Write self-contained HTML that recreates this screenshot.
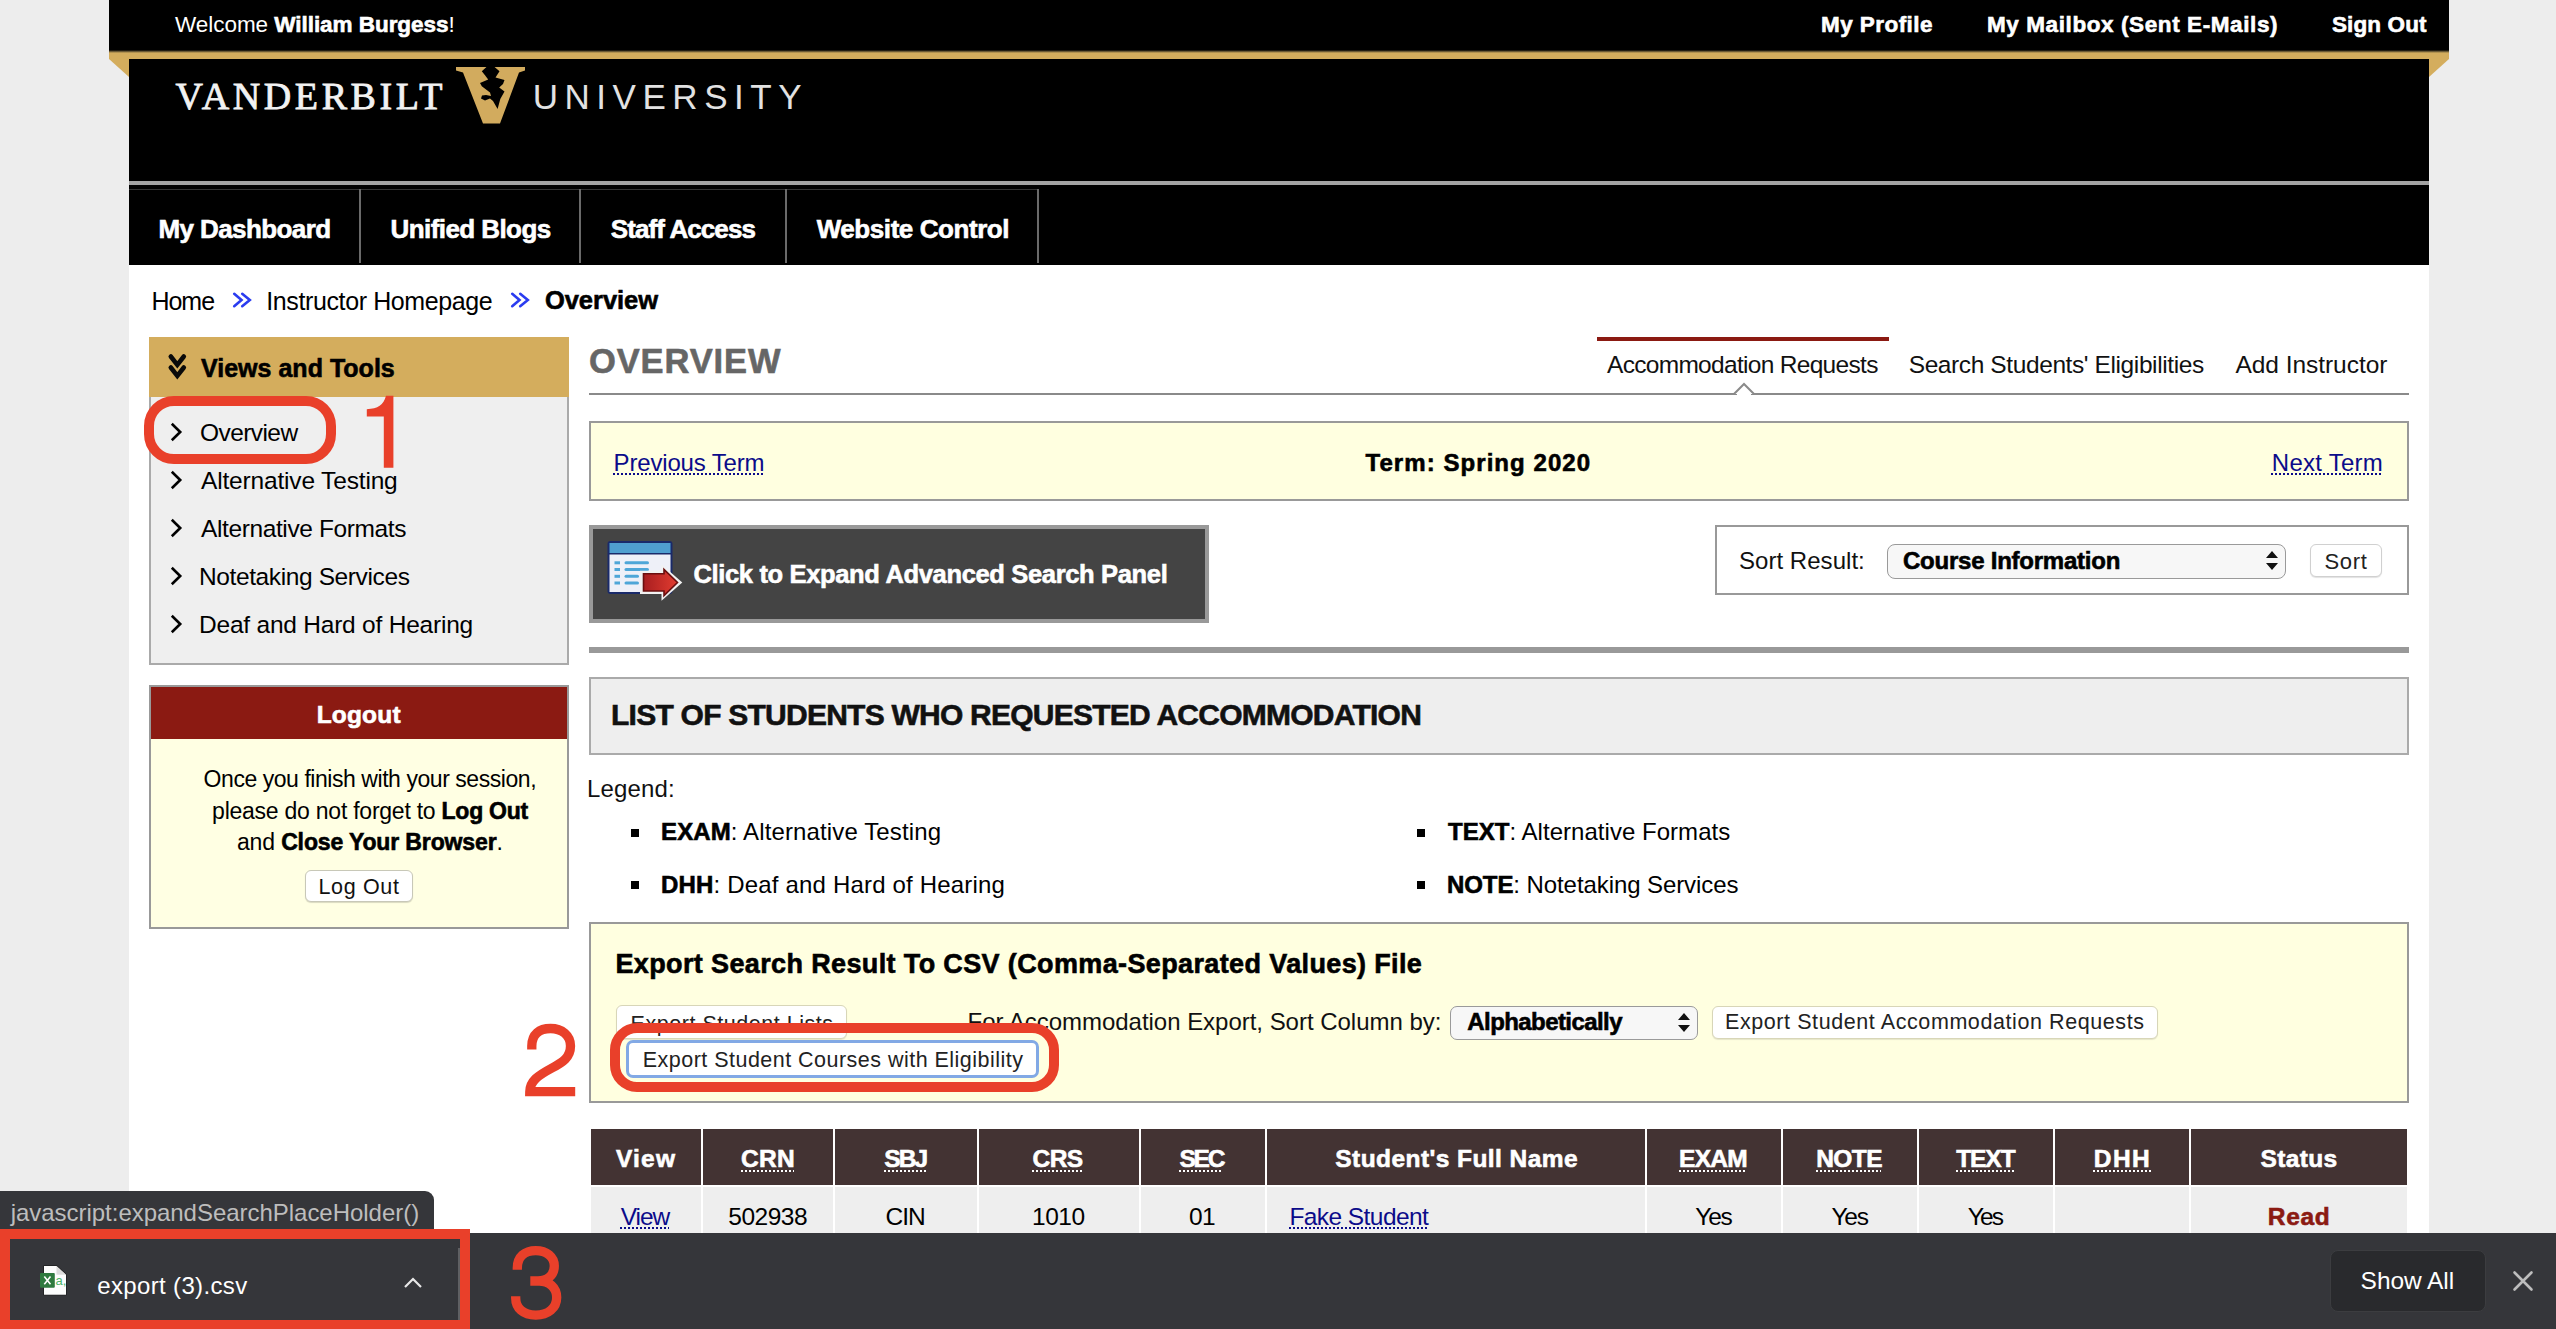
<!DOCTYPE html>
<html><head><meta charset="utf-8"><title>Overview</title>
<style>html,body{margin:0;padding:0;width:2556px;height:1329px;overflow:hidden;position:relative;font-family:"Liberation Sans",sans-serif;} b{font-weight:700;-webkit-text-stroke:0.6px}</style>
</head><body>
<div style="position:absolute;left:0px;top:0px;width:2556px;height:1329px;background:#ededed;"></div>
<div style="position:absolute;left:129px;top:59px;width:2300px;height:1270px;background:#ffffff;"></div>
<div style="position:absolute;left:109px;top:0px;width:2340px;height:50px;background:#000;"></div>
<div style="position:absolute;left:109px;top:50px;width:2340px;height:9px;background:linear-gradient(#000 0,#6b5a35 1.5px,#d4ad5d 3px,#d4ad5d 100%);"></div>
<svg style="position:absolute;left:109px;top:59px" width="20" height="18"><polygon points="0,0 20,0 20,18" fill="#d4ad5d"/></svg>
<svg style="position:absolute;left:2429px;top:59px" width="20" height="18"><polygon points="0,0 20,0 0,18" fill="#d4ad5d"/></svg>
<div style="position:absolute;left:129px;top:59px;width:2300px;height:122px;background:#000;"></div>
<div style="position:absolute;left:129px;top:181px;width:2300px;height:4px;background:#a3a3a3;"></div>
<div style="position:absolute;left:129px;top:185px;width:2300px;height:80px;background:#000;"></div>
<div style="position:absolute;left:129px;top:189px;width:909px;height:1px;background:#333;"></div>
<div style="position:absolute;left:359px;top:189px;width:2px;height:74px;background:#6a6a6a;"></div>
<div style="position:absolute;left:579px;top:189px;width:2px;height:74px;background:#6a6a6a;"></div>
<div style="position:absolute;left:785px;top:189px;width:2px;height:74px;background:#6a6a6a;"></div>
<div style="position:absolute;left:1037px;top:189px;width:2px;height:74px;background:#6a6a6a;"></div>
<svg style="position:absolute;left:445px;top:60px" width="90" height="70" viewBox="0 0 90 70">
<path d="M11,7 L42.5,7 L46,12 L49,7 L80,7 L80,10.5 L74,12.5 L55,63.5 L38,63.5 L18,12.5 L11,10.5 Z" fill="#d2ab5e"/>
<path d="M42,6.5 L49,6.5 L54.5,11.3 L50.5,17.4 L59.5,20 L58,24 L54.2,27.4 L59.5,31.6 L55.3,39 L52.6,49 L48,41 L45,38.5 L40,40.5 L36,38.5 L37,35.5 L41,35 L46,36 L45,32.5 L36.8,26.3 L35,23 L43.2,19.5 L40,15.3 L36.8,11.3 Z" fill="#000"/>
</svg>
<svg style="position:absolute;left:225px;top:285px" width="30" height="30"><path d="M9.2,8.8 L16.5,15 L9.2,21.2 M17.2,8.8 L24.8,15 L17.2,21.2" stroke="#2a3cf0" stroke-width="2.6" fill="none" stroke-linecap="round" stroke-linejoin="miter"/></svg>
<svg style="position:absolute;left:502.5px;top:285px" width="30" height="30"><path d="M9.2,8.8 L16.5,15 L9.2,21.2 M17.2,8.8 L24.8,15 L17.2,21.2" stroke="#2a3cf0" stroke-width="2.6" fill="none" stroke-linecap="round" stroke-linejoin="miter"/></svg>
<div style="position:absolute;left:149px;top:337px;width:420px;height:60px;background:#d4ad5d;"></div>
<svg style="position:absolute;left:160px;top:345px" width="40" height="45"><path d="M10.8,11.5 L17.3,19.8 L23.8,11.5 M10.8,22.5 L17.3,30.8 L23.8,22.5" stroke="#0a0a0a" stroke-width="4.6" fill="none" stroke-linecap="round"/></svg>
<div style="position:absolute;left:149px;top:397px;width:420px;height:268px;box-sizing:border-box;border:2px solid #aaa;background:#efefef;border-top:none;"></div>
<svg style="position:absolute;left:165px;top:417px" width="25" height="30"><path d="M6.8,6.8 L15.2,15 L6.8,23.2" stroke="#000" stroke-width="2.6" fill="none"/></svg>
<svg style="position:absolute;left:165px;top:465px" width="25" height="30"><path d="M6.8,6.8 L15.2,15 L6.8,23.2" stroke="#000" stroke-width="2.6" fill="none"/></svg>
<svg style="position:absolute;left:165px;top:513px" width="25" height="30"><path d="M6.8,6.8 L15.2,15 L6.8,23.2" stroke="#000" stroke-width="2.6" fill="none"/></svg>
<svg style="position:absolute;left:165px;top:561px" width="25" height="30"><path d="M6.8,6.8 L15.2,15 L6.8,23.2" stroke="#000" stroke-width="2.6" fill="none"/></svg>
<svg style="position:absolute;left:165px;top:609px" width="25" height="30"><path d="M6.8,6.8 L15.2,15 L6.8,23.2" stroke="#000" stroke-width="2.6" fill="none"/></svg>
<div style="position:absolute;left:149px;top:685px;width:420px;height:244px;box-sizing:border-box;border:2px solid #999;background:#ffffe3;"></div>
<div style="position:absolute;left:151px;top:687px;width:416px;height:52px;background:#8b1a12;"></div>
<div style="position:absolute;left:305px;top:870px;width:108px;height:32px;box-sizing:border-box;border:1px solid #c8c8b8;background:#fff;border-radius:6px;box-shadow:0 1px 1px rgba(0,0,0,0.15);"></div>
<div style="position:absolute;left:1597px;top:337px;width:292px;height:4px;background:#8b1a12;"></div>
<div style="position:absolute;left:589px;top:393px;width:1820px;height:2px;background:#8a8a8a;"></div>
<svg style="position:absolute;left:1730px;top:380px" width="28" height="16"><path d="M4,14 L14,4 L24,14" stroke="#8a8a8a" stroke-width="2" fill="#fff"/><rect x="7" y="13" width="14" height="2" fill="#fff"/></svg>
<div style="position:absolute;left:589px;top:421px;width:1820px;height:80px;box-sizing:border-box;border:2px solid #999;background:#ffffe0;"></div>
<div style="position:absolute;left:589px;top:525px;width:620px;height:98px;box-sizing:border-box;border:4px solid #999;background:#444;"></div>
<svg style="position:absolute;left:600px;top:535px" width="90" height="75" viewBox="0 0 90 75">
<rect x="7.5" y="6" width="65" height="53" rx="3" fill="#1a2a6a"/>
<rect x="9.5" y="8" width="61" height="10" fill="#4f9fd0"/>
<rect x="9.5" y="19.5" width="61" height="37.5" fill="#eef0f8"/>
<g fill="#4ea6d8"><rect x="14.5" y="26.3" width="5.5" height="3"/><rect x="14.5" y="33" width="5.5" height="3"/><rect x="14.5" y="39.8" width="5.5" height="3"/><rect x="14.5" y="46.5" width="5.5" height="3"/>
<rect x="24.5" y="26.3" width="24.5" height="3" rx="1.5"/><rect x="24.5" y="33" width="24.5" height="3" rx="1.5"/><rect x="24.5" y="39.8" width="14.5" height="3" rx="1.5"/><rect x="24.5" y="46.5" width="14.5" height="3" rx="1.5"/></g>
<path d="M40,35.8 L61.5,35.8 L61.5,29.2 L82.3,47.5 L61.5,65.8 L61.5,59 L40,59 Z" fill="#f2f2f2"/>
<defs><linearGradient id="ag" x1="0" y1="0" x2="1" y2="0"><stop offset="0" stop-color="#a81e20"/><stop offset="1" stop-color="#e23c30"/></linearGradient></defs><path d="M43.5,38.8 L64,38.8 L64,34.5 L77.5,47.5 L64,60.5 L64,56 L43.5,56 Z" fill="url(#ag)" stroke="#6a0f0f" stroke-width="1.6"/>
</svg>
<div style="position:absolute;left:1715px;top:525px;width:694px;height:70px;box-sizing:border-box;border:2px solid #999;background:#fff;"></div>
<div style="position:absolute;left:1887px;top:543.5px;width:399px;height:35.0px;box-sizing:border-box;border:1.5px solid #9a9a9a;background:#f7f7f7;border-radius:8px;"></div>
<svg style="position:absolute;left:2262px;top:548px" width="20" height="26"><path d="M4,10 L10,3 L16,10 Z M4,15 L10,22 L16,15 Z" fill="#111"/></svg>
<div style="position:absolute;left:2310px;top:543.5px;width:72px;height:33.5px;box-sizing:border-box;border:1px solid #d0d0d0;background:#fff;border-radius:6px;box-shadow:0 1px 1px rgba(0,0,0,0.12);"></div>
<div style="position:absolute;left:589px;top:647px;width:1820px;height:6px;background:#999;"></div>
<div style="position:absolute;left:589px;top:677px;width:1820px;height:78px;box-sizing:border-box;border:2px solid #aaa;background:#eeeeee;"></div>
<div style="position:absolute;left:631px;top:829px;width:8px;height:8px;background:#000;"></div>
<div style="position:absolute;left:631px;top:881px;width:8px;height:8px;background:#000;"></div>
<div style="position:absolute;left:1417px;top:829px;width:8px;height:8px;background:#000;"></div>
<div style="position:absolute;left:1417px;top:881px;width:8px;height:8px;background:#000;"></div>
<div style="position:absolute;left:589px;top:921.5px;width:1820px;height:181.5px;box-sizing:border-box;border:2px solid #999;background:#ffffe0;"></div>
<div style="position:absolute;left:616px;top:1005px;width:231px;height:33.5px;box-sizing:border-box;border:1px solid #d8d6b8;background:#fff;border-radius:6px;box-shadow:0 1px 1px rgba(0,0,0,0.1);"></div>
<div style="position:absolute;left:1450px;top:1005.5px;width:248px;height:34.5px;box-sizing:border-box;border:1.5px solid #9a9a9a;background:#f7f7f7;border-radius:7px;"></div>
<svg style="position:absolute;left:1674px;top:1010px" width="20" height="26"><path d="M4,10 L10,3 L16,10 Z M4,15 L10,22 L16,15 Z" fill="#111"/></svg>
<div style="position:absolute;left:1712px;top:1005.5px;width:445.5px;height:33.0px;box-sizing:border-box;border:1px solid #d8d6b8;background:#fff;border-radius:6px;box-shadow:0 1px 1px rgba(0,0,0,0.1);"></div>
<div style="position:absolute;left:591px;top:1129px;width:110px;height:56px;background:#433333;"></div>
<div style="position:absolute;left:591px;top:1187px;width:110px;height:142px;background:#eeeeee;"></div>
<div style="position:absolute;left:703px;top:1129px;width:130px;height:56px;background:#433333;"></div>
<div style="position:absolute;left:703px;top:1187px;width:130px;height:142px;background:#eeeeee;"></div>
<div style="position:absolute;left:835px;top:1129px;width:142px;height:56px;background:#433333;"></div>
<div style="position:absolute;left:835px;top:1187px;width:142px;height:142px;background:#eeeeee;"></div>
<div style="position:absolute;left:979px;top:1129px;width:160px;height:56px;background:#433333;"></div>
<div style="position:absolute;left:979px;top:1187px;width:160px;height:142px;background:#eeeeee;"></div>
<div style="position:absolute;left:1141px;top:1129px;width:124px;height:56px;background:#433333;"></div>
<div style="position:absolute;left:1141px;top:1187px;width:124px;height:142px;background:#eeeeee;"></div>
<div style="position:absolute;left:1267px;top:1129px;width:378px;height:56px;background:#433333;"></div>
<div style="position:absolute;left:1267px;top:1187px;width:378px;height:142px;background:#eeeeee;"></div>
<div style="position:absolute;left:1647px;top:1129px;width:134px;height:56px;background:#433333;"></div>
<div style="position:absolute;left:1647px;top:1187px;width:134px;height:142px;background:#eeeeee;"></div>
<div style="position:absolute;left:1783px;top:1129px;width:134px;height:56px;background:#433333;"></div>
<div style="position:absolute;left:1783px;top:1187px;width:134px;height:142px;background:#eeeeee;"></div>
<div style="position:absolute;left:1919px;top:1129px;width:134px;height:56px;background:#433333;"></div>
<div style="position:absolute;left:1919px;top:1187px;width:134px;height:142px;background:#eeeeee;"></div>
<div style="position:absolute;left:2055px;top:1129px;width:134px;height:56px;background:#433333;"></div>
<div style="position:absolute;left:2055px;top:1187px;width:134px;height:142px;background:#eeeeee;"></div>
<div style="position:absolute;left:2191px;top:1129px;width:216px;height:56px;background:#433333;"></div>
<div style="position:absolute;left:2191px;top:1187px;width:216px;height:142px;background:#eeeeee;"></div>
<div style="position:absolute;left:589px;top:1127px;width:1820px;height:2px;background:#fff;"></div>
<div style="position:absolute;left:175.0px;top:14.4px;font-family:'Liberation Sans';font-weight:400;font-size:22.5px;line-height:22.5px;white-space:pre;letter-spacing:-0.043px;color:#fff;">Welcome <b>William Burgess</b>!</div>
<div style="position:absolute;left:1821.0px;top:13.7px;font-family:'Liberation Sans';font-weight:700;font-size:22.5px;line-height:22.5px;white-space:pre;letter-spacing:0.444px;color:#fff;-webkit-text-stroke:0.6px;">My Profile</div>
<div style="position:absolute;left:1987.0px;top:13.7px;font-family:'Liberation Sans';font-weight:700;font-size:22.5px;line-height:22.5px;white-space:pre;letter-spacing:0.592px;color:#fff;-webkit-text-stroke:0.6px;">My Mailbox (Sent E-Mails)</div>
<div style="position:absolute;left:2332.0px;top:13.7px;font-family:'Liberation Sans';font-weight:700;font-size:22.5px;line-height:22.5px;white-space:pre;letter-spacing:0.114px;color:#fff;-webkit-text-stroke:0.6px;">Sign Out</div>
<div style="position:absolute;left:175.5px;top:77.2px;font-family:'Liberation Serif';font-weight:400;font-size:38px;line-height:38px;white-space:pre;letter-spacing:3.611px;color:#f2f2f2;-webkit-text-stroke:0.8px #f2f2f2;">VANDERBILT</div>
<div style="position:absolute;left:532.7px;top:79.0px;font-family:'Liberation Sans';font-weight:400;font-size:35px;line-height:35px;white-space:pre;letter-spacing:6.533px;color:#e2e2e2;">UNIVERSITY</div>
<div style="position:absolute;left:158.5px;top:215.7px;font-family:'Liberation Sans';font-weight:700;font-size:26px;line-height:26px;white-space:pre;letter-spacing:-0.591px;color:#fff;-webkit-text-stroke:0.6px;">My Dashboard</div>
<div style="position:absolute;left:390.5px;top:215.7px;font-family:'Liberation Sans';font-weight:700;font-size:26px;line-height:26px;white-space:pre;letter-spacing:-0.575px;color:#fff;-webkit-text-stroke:0.6px;">Unified Blogs</div>
<div style="position:absolute;left:610.8px;top:215.7px;font-family:'Liberation Sans';font-weight:700;font-size:26px;line-height:26px;white-space:pre;letter-spacing:-0.909px;color:#fff;-webkit-text-stroke:0.6px;">Staff Access</div>
<div style="position:absolute;left:816.7px;top:215.7px;font-family:'Liberation Sans';font-weight:700;font-size:26px;line-height:26px;white-space:pre;letter-spacing:-0.429px;color:#fff;-webkit-text-stroke:0.6px;">Website Control</div>
<div style="position:absolute;left:151.4px;top:289.1px;font-family:'Liberation Sans';font-weight:400;font-size:25px;line-height:25px;white-space:pre;letter-spacing:-1.0px;color:#000;">Home</div>
<div style="position:absolute;left:266.3px;top:289.1px;font-family:'Liberation Sans';font-weight:400;font-size:25px;line-height:25px;white-space:pre;letter-spacing:-0.389px;color:#000;">Instructor Homepage</div>
<div style="position:absolute;left:544.9px;top:288.0px;font-family:'Liberation Sans';font-weight:700;font-size:25.5px;line-height:25.5px;white-space:pre;letter-spacing:-0.029px;color:#000;-webkit-text-stroke:0.6px;">Overview</div>
<div style="position:absolute;left:201.0px;top:356.2px;font-family:'Liberation Sans';font-weight:700;font-size:25px;line-height:25px;white-space:pre;letter-spacing:0.014px;color:#000;-webkit-text-stroke:0.6px;">Views and Tools</div>
<div style="position:absolute;left:200.0px;top:420.8px;font-family:'Liberation Sans';font-weight:400;font-size:24.5px;line-height:24.5px;white-space:pre;letter-spacing:-0.571px;color:#000;">Overview</div>
<div style="position:absolute;left:201.0px;top:468.8px;font-family:'Liberation Sans';font-weight:400;font-size:24.5px;line-height:24.5px;white-space:pre;letter-spacing:-0.167px;color:#000;">Alternative Testing</div>
<div style="position:absolute;left:201.0px;top:516.8px;font-family:'Liberation Sans';font-weight:400;font-size:24.5px;line-height:24.5px;white-space:pre;letter-spacing:-0.389px;color:#000;">Alternative Formats</div>
<div style="position:absolute;left:199.0px;top:564.8px;font-family:'Liberation Sans';font-weight:400;font-size:24.5px;line-height:24.5px;white-space:pre;letter-spacing:-0.389px;color:#000;">Notetaking Services</div>
<div style="position:absolute;left:199.0px;top:612.8px;font-family:'Liberation Sans';font-weight:400;font-size:24.5px;line-height:24.5px;white-space:pre;letter-spacing:-0.217px;color:#000;">Deaf and Hard of Hearing</div>
<div style="position:absolute;left:316.7px;top:703.2px;font-family:'Liberation Sans';font-weight:700;font-size:24.5px;line-height:24.5px;white-space:pre;letter-spacing:0.18px;color:#fff;-webkit-text-stroke:0.6px;">Logout</div>
<div style="position:absolute;left:203.6px;top:767.9px;font-family:'Liberation Sans';font-weight:400;font-size:23px;line-height:23px;white-space:pre;letter-spacing:-0.448px;color:#000;">Once you finish with your session,</div>
<div style="position:absolute;left:212.1px;top:799.8px;font-family:'Liberation Sans';font-weight:400;font-size:23px;line-height:23px;white-space:pre;letter-spacing:-0.243px;color:#000;">please do not forget to <b>Log Out</b></div>
<div style="position:absolute;left:236.9px;top:831.2px;font-family:'Liberation Sans';font-weight:400;font-size:23px;line-height:23px;white-space:pre;letter-spacing:-0.132px;color:#000;">and <b>Close Your Browser</b>.</div>
<div style="position:absolute;left:318.4px;top:877.2px;font-family:'Liberation Sans';font-weight:400;font-size:21.5px;line-height:21.5px;white-space:pre;letter-spacing:0.667px;color:#111;">Log Out</div>
<div style="position:absolute;left:589.0px;top:343.9px;font-family:'Liberation Sans';font-weight:700;font-size:34.5px;line-height:34.5px;white-space:pre;letter-spacing:0.886px;color:#666;-webkit-text-stroke:0.6px;">OVERVIEW</div>
<div style="position:absolute;left:1607.0px;top:353.2px;font-family:'Liberation Sans';font-weight:400;font-size:24.5px;line-height:24.5px;white-space:pre;letter-spacing:-0.695px;color:#111;">Accommodation Requests</div>
<div style="position:absolute;left:1908.7px;top:353.2px;font-family:'Liberation Sans';font-weight:400;font-size:24.5px;line-height:24.5px;white-space:pre;letter-spacing:-0.397px;color:#111;">Search Students' Eligibilities</div>
<div style="position:absolute;left:2235.4px;top:353.2px;font-family:'Liberation Sans';font-weight:400;font-size:24.5px;line-height:24.5px;white-space:pre;letter-spacing:-0.038px;color:#111;">Add Instructor</div>
<div style="position:absolute;left:613.6px;top:450.6px;font-family:'Liberation Sans';font-weight:400;font-size:24px;line-height:24px;white-space:pre;letter-spacing:-0.167px;color:#0b0b8a;"><span style="text-decoration:underline dotted;text-decoration-thickness:2px;text-underline-offset:3px">Previous Term</span></div>
<div style="position:absolute;left:1365.5px;top:451.1px;font-family:'Liberation Sans';font-weight:700;font-size:24px;line-height:24px;white-space:pre;letter-spacing:1.062px;color:#000;-webkit-text-stroke:0.6px;">Term: Spring 2020</div>
<div style="position:absolute;left:2271.8px;top:450.6px;font-family:'Liberation Sans';font-weight:400;font-size:24px;line-height:24px;white-space:pre;letter-spacing:0.25px;color:#0b0b8a;"><span style="text-decoration:underline dotted;text-decoration-thickness:2px;text-underline-offset:3px">Next Term</span></div>
<div style="position:absolute;left:693.4px;top:562.0px;font-family:'Liberation Sans';font-weight:700;font-size:25.5px;line-height:25.5px;white-space:pre;letter-spacing:-0.339px;color:#fff;-webkit-text-stroke:0.6px;">Click to Expand Advanced Search Panel</div>
<div style="position:absolute;left:1739.0px;top:548.9px;font-family:'Liberation Sans';font-weight:400;font-size:24px;line-height:24px;white-space:pre;letter-spacing:0.036px;color:#111;">Sort Result:</div>
<div style="position:absolute;left:1903.0px;top:548.9px;font-family:'Liberation Sans';font-weight:700;font-size:24px;line-height:24px;white-space:pre;letter-spacing:-0.235px;color:#000;-webkit-text-stroke:0.6px;">Course Information</div>
<div style="position:absolute;left:2324.5px;top:550.6px;font-family:'Liberation Sans';font-weight:400;font-size:22px;line-height:22px;white-space:pre;letter-spacing:0.667px;color:#222;">Sort</div>
<div style="position:absolute;left:611.0px;top:700.0px;font-family:'Liberation Sans';font-weight:700;font-size:30px;line-height:30px;white-space:pre;letter-spacing:-0.756px;color:#111;-webkit-text-stroke:0.6px;">LIST OF STUDENTS WHO REQUESTED ACCOMMODATION</div>
<div style="position:absolute;left:587.0px;top:777.0px;font-family:'Liberation Sans';font-weight:400;font-size:24px;line-height:24px;white-space:pre;letter-spacing:0.167px;color:#111;">Legend:</div>
<div style="position:absolute;left:661.0px;top:820.3px;font-family:'Liberation Sans';font-weight:400;font-size:24px;line-height:24px;white-space:pre;letter-spacing:0.125px;color:#000;"><b>EXAM</b>: Alternative Testing</div>
<div style="position:absolute;left:661.0px;top:872.6px;font-family:'Liberation Sans';font-weight:400;font-size:24px;line-height:24px;white-space:pre;letter-spacing:0.179px;color:#000;"><b>DHH</b>: Deaf and Hard of Hearing</div>
<div style="position:absolute;left:1448.0px;top:820.3px;font-family:'Liberation Sans';font-weight:400;font-size:24px;line-height:24px;white-space:pre;letter-spacing:0.033px;color:#000;"><b>TEXT</b>: Alternative Formats</div>
<div style="position:absolute;left:1447.0px;top:872.6px;font-family:'Liberation Sans';font-weight:400;font-size:24px;line-height:24px;white-space:pre;letter-spacing:-0.083px;color:#000;"><b>NOTE</b>: Notetaking Services</div>
<div style="position:absolute;left:615.4px;top:950.5px;font-family:'Liberation Sans';font-weight:700;font-size:27px;line-height:27px;white-space:pre;letter-spacing:0.371px;color:#000;-webkit-text-stroke:0.6px;">Export Search Result To CSV (Comma-Separated Values) File</div>
<div style="position:absolute;left:630.6px;top:1013.7px;font-family:'Liberation Sans';font-weight:400;font-size:21.5px;line-height:21.5px;white-space:pre;letter-spacing:0.526px;color:#222;">Export Student Lists</div>
<div style="position:absolute;left:967.5px;top:1010.1px;font-family:'Liberation Sans';font-weight:400;font-size:24px;line-height:24px;white-space:pre;letter-spacing:-0.025px;color:#111;">For Accommodation Export, Sort Column by:</div>
<div style="position:absolute;left:1467.3px;top:1010.1px;font-family:'Liberation Sans';font-weight:700;font-size:24px;line-height:24px;white-space:pre;letter-spacing:-0.577px;color:#000;-webkit-text-stroke:0.6px;">Alphabetically</div>
<div style="position:absolute;left:1725.0px;top:1012.2px;font-family:'Liberation Sans';font-weight:400;font-size:21.5px;line-height:21.5px;white-space:pre;letter-spacing:0.583px;color:#222;">Export Student Accommodation Requests</div>
<div style="position:absolute;left:626px;top:1040px;width:413px;height:38px;box-sizing:border-box;border:3.5px solid #82a9e5;background:#fff;border-radius:7px;"></div>
<div style="position:absolute;left:642.8px;top:1049.9px;font-family:'Liberation Sans';font-weight:400;font-size:21.5px;line-height:21.5px;white-space:pre;letter-spacing:0.474px;color:#222;">Export Student Courses with Eligibility</div>
<div style="position:absolute;left:616.0px;top:1147.2px;font-family:'Liberation Sans';font-weight:700;font-size:24.5px;line-height:24.5px;white-space:pre;letter-spacing:1.2px;color:#fff;-webkit-text-stroke:0.6px;">View</div>
<div style="position:absolute;left:741.0px;top:1147.2px;font-family:'Liberation Sans';font-weight:700;font-size:24.5px;line-height:24.5px;white-space:pre;letter-spacing:0.3px;color:#fff;-webkit-text-stroke:0.6px;"><span style="text-decoration:underline dotted;text-decoration-thickness:2px;text-underline-offset:3px">CRN</span></div>
<div style="position:absolute;left:884.2px;top:1147.2px;font-family:'Liberation Sans';font-weight:700;font-size:24.5px;line-height:24.5px;white-space:pre;letter-spacing:-1.8px;color:#fff;-webkit-text-stroke:0.6px;"><span style="text-decoration:underline dotted;text-decoration-thickness:2px;text-underline-offset:3px">SBJ</span></div>
<div style="position:absolute;left:1032.5px;top:1147.2px;font-family:'Liberation Sans';font-weight:700;font-size:24.5px;line-height:24.5px;white-space:pre;letter-spacing:-0.55px;color:#fff;-webkit-text-stroke:0.6px;"><span style="text-decoration:underline dotted;text-decoration-thickness:2px;text-underline-offset:3px">CRS</span></div>
<div style="position:absolute;left:1179.4px;top:1147.2px;font-family:'Liberation Sans';font-weight:700;font-size:24.5px;line-height:24.5px;white-space:pre;letter-spacing:-2.2px;color:#fff;-webkit-text-stroke:0.6px;"><span style="text-decoration:underline dotted;text-decoration-thickness:2px;text-underline-offset:3px">SEC</span></div>
<div style="position:absolute;left:1335.3px;top:1147.2px;font-family:'Liberation Sans';font-weight:700;font-size:24.5px;line-height:24.5px;white-space:pre;letter-spacing:0.428px;color:#fff;-webkit-text-stroke:0.6px;">Student's Full Name</div>
<div style="position:absolute;left:1679.0px;top:1147.2px;font-family:'Liberation Sans';font-weight:700;font-size:24.5px;line-height:24.5px;white-space:pre;letter-spacing:-0.667px;color:#fff;-webkit-text-stroke:0.6px;"><span style="text-decoration:underline dotted;text-decoration-thickness:2px;text-underline-offset:3px">EXAM</span></div>
<div style="position:absolute;left:1816.2px;top:1147.2px;font-family:'Liberation Sans';font-weight:700;font-size:24.5px;line-height:24.5px;white-space:pre;letter-spacing:-0.567px;color:#fff;-webkit-text-stroke:0.6px;"><span style="text-decoration:underline dotted;text-decoration-thickness:2px;text-underline-offset:3px">NOTE</span></div>
<div style="position:absolute;left:1956.2px;top:1147.2px;font-family:'Liberation Sans';font-weight:700;font-size:24.5px;line-height:24.5px;white-space:pre;letter-spacing:-1.067px;color:#fff;-webkit-text-stroke:0.6px;"><span style="text-decoration:underline dotted;text-decoration-thickness:2px;text-underline-offset:3px">TEXT</span></div>
<div style="position:absolute;left:2093.7px;top:1147.2px;font-family:'Liberation Sans';font-weight:700;font-size:24.5px;line-height:24.5px;white-space:pre;letter-spacing:1.5px;color:#fff;-webkit-text-stroke:0.6px;"><span style="text-decoration:underline dotted;text-decoration-thickness:2px;text-underline-offset:3px">DHH</span></div>
<div style="position:absolute;left:2260.5px;top:1147.2px;font-family:'Liberation Sans';font-weight:700;font-size:24.5px;line-height:24.5px;white-space:pre;letter-spacing:0.36px;color:#fff;-webkit-text-stroke:0.6px;">Status</div>
<div style="position:absolute;left:620.8px;top:1204.8px;font-family:'Liberation Sans';font-weight:400;font-size:24.5px;line-height:24.5px;white-space:pre;letter-spacing:-1.1px;color:#0b0b8a;"><span style="text-decoration:underline dotted;text-decoration-thickness:2px;text-underline-offset:3px">View</span></div>
<div style="position:absolute;left:728.3px;top:1204.8px;font-family:'Liberation Sans';font-weight:400;font-size:24.5px;line-height:24.5px;white-space:pre;letter-spacing:-0.5px;color:#000;">502938</div>
<div style="position:absolute;left:885.5px;top:1204.8px;font-family:'Liberation Sans';font-weight:400;font-size:24.5px;line-height:24.5px;white-space:pre;letter-spacing:-0.95px;color:#000;">CIN</div>
<div style="position:absolute;left:1032.0px;top:1204.8px;font-family:'Liberation Sans';font-weight:400;font-size:24.5px;line-height:24.5px;white-space:pre;letter-spacing:-0.467px;color:#000;">1010</div>
<div style="position:absolute;left:1188.9px;top:1204.8px;font-family:'Liberation Sans';font-weight:400;font-size:24.5px;line-height:24.5px;white-space:pre;letter-spacing:-0.5px;color:#000;">01</div>
<div style="position:absolute;left:1289.4px;top:1204.8px;font-family:'Liberation Sans';font-weight:400;font-size:24.5px;line-height:24.5px;white-space:pre;letter-spacing:-0.564px;color:#0b0b8a;"><span style="text-decoration:underline dotted;text-decoration-thickness:2px;text-underline-offset:3px">Fake Student</span></div>
<div style="position:absolute;left:1695.3px;top:1204.8px;font-family:'Liberation Sans';font-weight:400;font-size:24.5px;line-height:24.5px;white-space:pre;letter-spacing:-1.25px;color:#000;">Yes</div>
<div style="position:absolute;left:1831.5px;top:1204.8px;font-family:'Liberation Sans';font-weight:400;font-size:24.5px;line-height:24.5px;white-space:pre;letter-spacing:-1.25px;color:#000;">Yes</div>
<div style="position:absolute;left:1967.7px;top:1204.8px;font-family:'Liberation Sans';font-weight:400;font-size:24.5px;line-height:24.5px;white-space:pre;letter-spacing:-1.85px;color:#000;">Yes</div>
<div style="position:absolute;left:2267.8px;top:1204.8px;font-family:'Liberation Sans';font-weight:700;font-size:24.5px;line-height:24.5px;white-space:pre;letter-spacing:0.667px;color:#8b1a12;-webkit-text-stroke:0.6px;">Read</div>
<div style="position:absolute;left:0px;top:1233px;width:2556px;height:96px;background:#35363a;"></div>
<div style="position:absolute;left:0px;top:1191px;width:434px;height:42px;background:#35363a;border-top-right-radius:9px;"></div>
<div style="position:absolute;left:10.7px;top:1200.6px;font-family:'Liberation Sans';font-weight:400;font-size:24px;line-height:24px;white-space:pre;letter-spacing:-0.031px;color:#bdbdbd;">javascript:expandSearchPlaceHolder()</div>
<div style="position:absolute;left:457.5px;top:1248px;width:2.0px;height:81px;background:#5f6063;"></div>
<svg style="position:absolute;left:30px;top:1255px" width="50" height="50" viewBox="0 0 50 50">
<path d="M13.5,10.5 L27,10.5 L36.5,19.5 L36.5,40.3 L13.5,40.3 Z" fill="#111"/>
<path d="M14,11 L26.5,11 L36,19.8 L36,39.8 L14,39.8 Z" fill="#fdfdfd"/>
<path d="M26.5,11 L26.5,19.8 L36,19.8 Z" fill="#dcdcdc"/>
<rect x="10" y="18" width="14.8" height="14.7" rx="1" fill="#2f7a3f"/>
<path d="M14.3,21.6 L20.5,29.3 M20.5,21.6 L14.3,29.3" stroke="#fff" stroke-width="1.6"/>
<text x="25.5" y="30" font-family="Liberation Sans" font-size="13" fill="#4cb56a">a,</text>
</svg>
<svg style="position:absolute;left:400px;top:1272px" width="26" height="20"><path d="M5,15 L13,7 L21,15" stroke="#e8e8e8" stroke-width="2.2" fill="none"/></svg>
<div style="position:absolute;left:97.2px;top:1273.6px;font-family:'Liberation Sans';font-weight:400;font-size:24px;line-height:24px;white-space:pre;letter-spacing:0.354px;color:#fff;">export (3).csv</div>
<div style="position:absolute;left:2330px;top:1250px;width:156px;height:62px;box-sizing:border-box;border:1px solid #3c3d40;background:#292a2d;border-radius:8px;"></div>
<div style="position:absolute;left:2360.6px;top:1268.5px;font-family:'Liberation Sans';font-weight:400;font-size:24.5px;line-height:24.5px;white-space:pre;letter-spacing:-0.057px;color:#fff;">Show All</div>
<svg style="position:absolute;left:2510px;top:1268px" width="26" height="26"><path d="M4.5,4.5 L21.5,21.5 M21.5,4.5 L4.5,21.5" stroke="#bdbdbd" stroke-width="2.6" stroke-linecap="round"/></svg>
<div style="position:absolute;left:144px;top:396px;width:192px;height:68px;box-sizing:border-box;border:10px solid #e9402a;background:transparent;border-radius:30px;"></div>
<div style="position:absolute;left:609.5px;top:1022.5px;width:449.5px;height:69.5px;box-sizing:border-box;border:10px solid #e9402a;background:transparent;border-radius:27px;"></div>
<div style="position:absolute;left:0px;top:1228.5px;width:470px;height:101.5px;box-sizing:border-box;border:10.5px solid #e9402a;background:transparent;"></div>
<svg style="position:absolute;left:355px;top:390px" width="50" height="85"><path d="M31,5.8 L38.4,5.8 L38.4,77.7 L28.8,77.7 L28.8,26.5 L11.8,26.5 L11.8,19.2 C23,18.6 28.5,15.5 31,5.8 Z" fill="#e9402a"/></svg>
<svg style="position:absolute;left:500px;top:1015px" width="100" height="90"><path d="M31.8,34.5 L31.8,31 C31.8,19 39.5,13.5 50.5,13.5 C62,13.5 70.5,20.5 70.5,31 C70.5,42.5 62.5,47.5 52,53 C38,60.5 30,66 29.8,76.6 L75.2,76.6" stroke="#e9402a" stroke-width="9.3" fill="none"/></svg>
<svg style="position:absolute;left:495px;top:1238px" width="85" height="91"><path d="M22.3,31.8 L22.3,30 C22.3,18.5 30,12.6 40.8,12.6 C51.5,12.6 59.3,19 59.3,28 C59.3,37.5 52,43 43,43 L35.3,43 M35.3,43 L44,43 C54,43 61.7,49.5 61.7,59.5 C61.7,70 53,77.1 40.8,77.1 C28,77.1 20.7,70 20.7,60 L20.7,58.2" stroke="#e9402a" stroke-width="9.3" fill="none"/></svg>
</body></html>
